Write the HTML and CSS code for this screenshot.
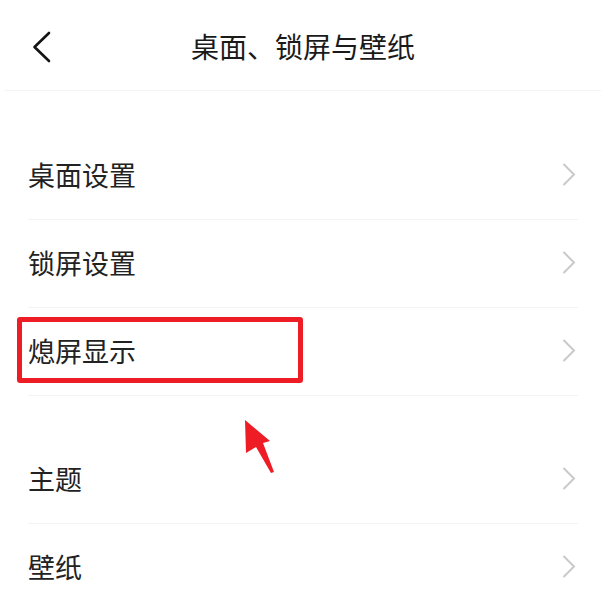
FILE: index.html
```html
<!DOCTYPE html>
<html lang="zh-CN">
<head>
<meta charset="utf-8">
<title>桌面、锁屏与壁纸</title>
<link rel="stylesheet" href="styles.css">
</head>
<body>
<div class="page">
  <header class="header">
    <div class="back">
      <svg width="20" height="32" viewBox="0 0 20 32" aria-hidden="true">
        <path d="M17 2 L2.5 16 L17 30" fill="none" stroke="#141414" stroke-width="2.6" stroke-linecap="round" stroke-linejoin="round"/>
      </svg>
    </div>
    <h1 class="title">桌面、锁屏与壁纸</h1>
    <div></div>
  </header>

  <section class="group first">
    <div class="row"><span class="label">桌面设置</span><svg class="chev" width="16" height="24" viewBox="0 0 16 24"><path d="M2.5 2 L13 12.5 L2.5 23" fill="none" stroke="#c9c9c9" stroke-width="2"/></svg></div>
    <div class="row"><span class="label">锁屏设置</span><svg class="chev" width="16" height="24" viewBox="0 0 16 24"><path d="M2.5 2 L13 12.5 L2.5 23" fill="none" stroke="#c9c9c9" stroke-width="2"/></svg></div>
    <div class="row"><span class="label">熄屏显示</span><svg class="chev" width="16" height="24" viewBox="0 0 16 24"><path d="M2.5 2 L13 12.5 L2.5 23" fill="none" stroke="#c9c9c9" stroke-width="2"/></svg></div>
  </section>

  <section class="group">
    <div class="row"><span class="label">主题</span><svg class="chev" width="16" height="24" viewBox="0 0 16 24"><path d="M2.5 2 L13 12.5 L2.5 23" fill="none" stroke="#c9c9c9" stroke-width="2"/></svg></div>
    <div class="row"><span class="label">壁纸</span><svg class="chev" width="16" height="24" viewBox="0 0 16 24"><path d="M2.5 2 L13 12.5 L2.5 23" fill="none" stroke="#c9c9c9" stroke-width="2"/></svg></div>
  </section>

  <div class="highlight"></div>
  <svg class="pointer" width="40" height="60" viewBox="0 0 40 60" aria-hidden="true">
    <polygon points="5,0 30,21 23,23 34,52 31,53 16,27 6,33" fill="#ee1c25"/>
  </svg>
</div>
</body>
</html>
```

FILE: styles.css
```css
html, body {
  margin: 0;
  padding: 0;
  background: #ffffff;
}

body {
  font-family: "Noto Sans CJK SC", "Noto Sans", sans-serif;
  color: #222222;
}

.page {
  position: relative;
  width: 606px;
  height: 596px;
  overflow: hidden;
}

.header {
  height: 90px;
  margin: 0 5px;
  border-bottom: 1px solid #f3f3f3;
  display: grid;
  grid-template-columns: 1fr auto 1fr;
  align-items: center;
}

.back {
  padding-left: 27px;
  display: flex;
  align-items: center;
  margin-top: 3px;
}

.title {
  margin: 0;
  font-size: 28px;
  font-weight: 400;
  color: #1a1a1a;
  line-height: 1;
  margin-top: 2px;
}

.group {
  margin: 40px 28px 0 28px;
}

.group.first {
  margin-top: 41px;
}

.row {
  box-sizing: border-box;
  height: 88px;
  border-bottom: 1px solid #f3f3f3;
  display: flex;
  align-items: center;
  justify-content: space-between;
  padding-right: 1px;
  padding-bottom: 3px;
}

.label {
  font-size: 27px;
  line-height: 1;
  color: #222222;
}

.chev {
  display: block;
}

.highlight {
  position: absolute;
  left: 17px;
  top: 317px;
  width: 286px;
  height: 66px;
  box-sizing: border-box;
  border: 5px solid #ee1c25;
  border-radius: 3px;
}

.pointer {
  position: absolute;
  left: 240px;
  top: 420px;
}
```
